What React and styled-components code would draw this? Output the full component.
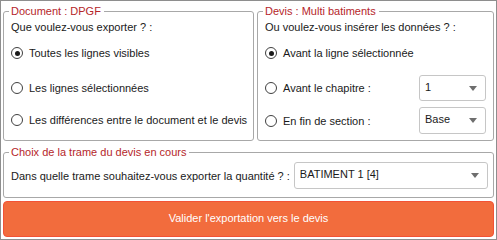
import React from "react";
import styled, { createGlobalStyle } from "styled-components";

const GlobalStyle = createGlobalStyle`
  html, body { margin: 0; padding: 0; background: #ffffff; }
  body { font-family: "Liberation Sans", Arial, sans-serif; font-size: 11px; color: #1a1a1a; }
  * { box-sizing: border-box; }
`;

const Window = styled.div`
  width: 497px;
  height: 240px;
  border: 1px solid #8e8e8e;
  padding: 2px;
  display: flex;
  flex-direction: column;
  gap: 3px;
  background: #fff;
`;

const TopRow = styled.div`
  display: flex;
  gap: 3px;
  height: 138px;
`;

const Group = styled.fieldset`
  margin: 0;
  min-width: 0;
  border: 1px solid #a8a8a8;
  border-radius: 3px;
  padding: 0 ${(p) => p.$padRight ?? 7}px ${(p) => p.$padBottom ?? 0}px 7px;
  width: ${(p) => (p.$width ? `${p.$width}px` : "auto")};
  flex: ${(p) => (p.$width ? "none" : "1")};
  display: flex;
  flex-direction: column;
`;

const Legend = styled.legend`
  color: #b5262a;
  font-size: 11px;
  line-height: 16px;
  padding: 0 3px 0 2px;
  margin-left: -2px;
`;

const Question = styled.div`
  height: 16px;
  line-height: 16px;
  white-space: nowrap;
`;

const Options = styled.div`
  display: flex;
  flex-direction: column;
`;

const OptionRow = styled.div`
  display: flex;
  align-items: center;
  justify-content: space-between;
  height: ${(p) => p.$height ?? 26}px;
  margin-top: ${(p) => p.$top ?? 0}px;
`;

const OptionLabel = styled.label`
  display: flex;
  align-items: center;
  gap: 6px;
  white-space: nowrap;
`;

const Radio = styled.span`
  width: 12px;
  height: 12px;
  border-radius: 50%;
  border: 1px solid #404040;
  display: inline-flex;
  align-items: center;
  justify-content: center;
  flex: none;
  &::after {
    content: "";
    width: 5px;
    height: 5px;
    border-radius: 50%;
    background: ${(p) => (p.$checked ? "#1a1a1a" : "transparent")};
  }
`;

const SelectBox = styled.div`
  width: ${(p) => (p.$width ? `${p.$width}px` : "auto")};
  flex: ${(p) => (p.$width ? "none" : "1")};
  height: ${(p) => p.$height ?? 26}px;
  border: 1px solid #c6c6c6;
  border-radius: 3px;
  display: flex;
  align-items: center;
  justify-content: space-between;
  padding: 0 8px 3px 5px;
  white-space: nowrap;
  background: #fff;
`;

const Arrow = styled.span`
  width: 0;
  height: 0;
  border-left: 4px solid transparent;
  border-right: 4px solid transparent;
  border-top: 5px solid #6e6e6e;
  margin-top: 3px;
`;

const TrameRow = styled.div`
  display: flex;
  align-items: center;
  gap: 4px;
  margin-top: 2px;
`;

const ValidateButton = styled.button`
  height: 36px;
  border: 1px solid #f25236;
  border-radius: 4px;
  background: #f26c3d;
  color: #ffffff;
  font-family: inherit;
  font-size: 11px;
  padding: 0 0 2px 0;
`;

function Select({ value, width, height }) {
  return (
    <SelectBox $width={width} $height={height}>
      <span>{value}</span>
      <Arrow />
    </SelectBox>
  );
}

export default function App() {
  return (
    <>
      <GlobalStyle />
      <Window>
        <TopRow>
          <Group $width={251}>
            <Legend>Document : DPGF</Legend>
            <Question>Que voulez-vous exporter ? :</Question>
            <Options>
              <OptionRow $top={5}>
                <OptionLabel><Radio $checked />Toutes les lignes visibles</OptionLabel>
              </OptionRow>
              <OptionRow $top={9}>
                <OptionLabel><Radio />Les lignes sélectionnées</OptionLabel>
              </OptionRow>
              <OptionRow $top={5} $height={27}>
                <OptionLabel><Radio />Les différences entre le document et le devis</OptionLabel>
              </OptionRow>
            </Options>
          </Group>
          <Group>
            <Legend>Devis : Multi batiments</Legend>
            <Question>Ou voulez-vous insérer les données ? :</Question>
            <Options>
              <OptionRow $top={5}>
                <OptionLabel><Radio $checked />Avant la ligne sélectionnée</OptionLabel>
              </OptionRow>
              <OptionRow $top={9}>
                <OptionLabel><Radio />Avant le chapitre :</OptionLabel>
                <Select value="1" width={67} />
              </OptionRow>
              <OptionRow $top={6} $height={27}>
                <OptionLabel><Radio />En fin de section :</OptionLabel>
                <Select value="Base" width={67} height={27} />
              </OptionRow>
            </Options>
          </Group>
        </TopRow>
        <Group $padBottom={8} $padRight={5}>
          <Legend>Choix de la trame du devis en cours</Legend>
          <TrameRow>
            <span>Dans quelle trame souhaitez-vous exporter la quantité ? :</span>
            <Select value="BATIMENT 1 [4]" height={27} />
          </TrameRow>
        </Group>
        <ValidateButton>Valider l'exportation vers le devis</ValidateButton>
      </Window>
    </>
  );
}
